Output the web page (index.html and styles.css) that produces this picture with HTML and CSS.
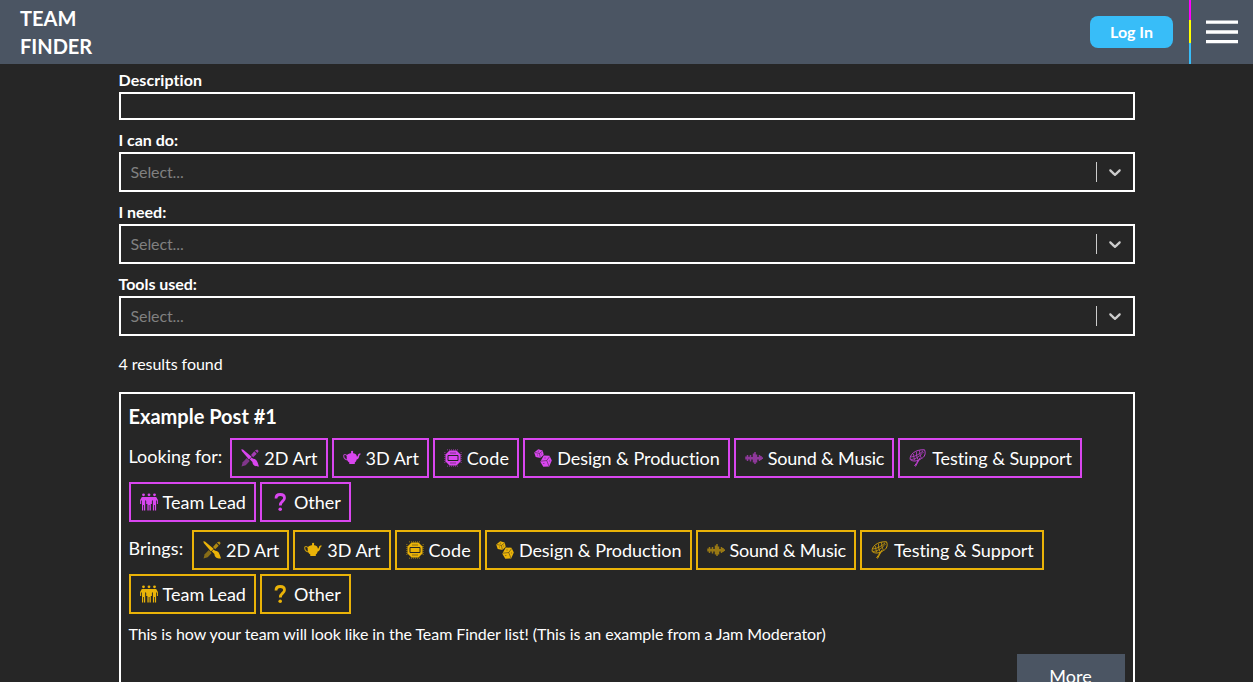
FILE: index.html
```html
<!DOCTYPE html>
<html lang="en">
<head>
<meta charset="utf-8">
<title>Team Finder</title>
<link rel="stylesheet" href="styles.css">
</head>
<body>
<svg class="sprite" aria-hidden="true">
  <symbol id="art2d" viewBox="0 0 18 18">
    <path d="M.3.3 2 .6l8.600 7.200-2.600 2.800L.8 2z" fill="currentColor"/>
    <path d="m10.300 8.600 2 1.200c3.500.2 4.400 3.300 5.700 7.700-3.500.3-6.600-1.100-6.600-4.500L8.900 10.600z" fill="currentColor"/>
    <path d="m16.200.4 1.500 1.500-1.200 2.200-2.600-2.600zM13.300 2.300l2.400 2.400-3.500 3.500-2.200-2.200z" fill="currentColor" opacity=".7"/>
    <path d="M5.800 9 1.700 13.300.5 17.500l4.200-1.200 4-4.200z" fill="currentColor" opacity=".5"/>
  </symbol>
  <symbol id="art3d" viewBox="0 0 18 18">
    <path d="M8.200 3.500a1.100 1.100 0 1 1 1.800 0l.2.800c1.800.3 3 1 3.300 1.900l.3 1.400c.8 0 1-.5 1.200-1.500.2-1 .8-1.600 2.700-1.500l-.2.800c-1.100.1-1.100 1.400-1.500 2.600-.4 1.300-1.200 2.200-2.300 2.600-.4 1.500-1 2.500-1.900 3v1.400H6.300v-1.400c-2-1-2.900-3.400-2.600-6.300l.3-1.200c.5-.9 1.900-1.500 3.900-1.800z" fill="currentColor"/>
    <path d="M4.200 7C3 5.300.6 4.700.7 7c.1 2 1.600 3.500 3.800 4" fill="none" stroke="currentColor" stroke-width="1.100" opacity=".8"/>
  </symbol>
  <symbol id="code" viewBox="0 0 18 18">
    <path d="M5.500 1.500h7l4 4v7l-4 4h-7l-4-4v-7z" fill="currentColor"/>
    <path d="M3 .8h12M3 17.200h12M.8 3v12M17.200 3v12" stroke="currentColor" stroke-width="1.500" stroke-dasharray="1 1" opacity=".4"/>
    <path d="M4 6.500h10v5H4z" class="cut"/>
    <path d="M6 4h6M6 14h6" class="cut faint"/>
  </symbol>
  <symbol id="design" viewBox="0 0 18 18">
    <path d="m4.200.2 4.500 1.200 1 4.300-3.200 3.300-4.800-1L.2 3.600zM9.700 6.500l5.800.3 2.300 4.600-2.600 6-5.900.3-3-5z" fill="currentColor"/>
    <path d="m.8 3.500 4.600.9 3.500-2.700M5.400 4.400l1 4.400M6.700 12.200l6-.7 3-4M12.700 11.500l2.200 5.500" class="cut faint"/>
    <path d="M3.800 2.200h1M3 6h.8M7.300 5h.8M10.500 9h1M9.300 14.500h1M15.300 12h.8" class="cut soft"/>
  </symbol>
  <symbol id="sound" viewBox="0 0 18 18">
    <path d="M1 7.500v3M2.500 6v6M4 7.700v2.800M5.500 6v6.500M7 8v2.500M8.500 4.500v9M10 3v12M11.500 5.500v8M13 8v2.500M14.500 6v6M16 7v4M17.300 8.300v1.600" stroke="currentColor" stroke-width="1.500" opacity=".58"/>
  </symbol>
  <symbol id="testing" viewBox="0 0 18 18">
    <g fill="none" stroke="currentColor" opacity=".85">
      <path d="M1.200 10.500C.3 6 6 .2 15.500.8c1.600 3.500.2 7.500-3.200 8.700-3.500 3-8.500 3.300-11.100 1z"/>
      <path d="M2 8c4-.5 8-2.500 12-6M2 10.500c5-.3 9-3.500 12.500-7.500M4.500 5c0 2 .5 4.500 1.500 6.300M7.500 3c-.2 2.500.3 5.500 1.500 7.700M10.500 1.500c0 2.500.5 5 1.800 7.500" stroke-width=".8"/>
      <path d="m11 9-4.500 8.500M10 10.500 5.500 17"/>
    </g>
  </symbol>
  <symbol id="lead" viewBox="0 0 18 18">
    <g fill="currentColor"><circle cx="3.500" cy="1.800" r="1.400"/><circle cx="9" cy="1.800" r="1.400"/><circle cx="14.500" cy="1.800" r="1.400"/>
    <path d="M1.800 4h14.400l1.700 3v4h-1V8l-.8-1v10.500H15V12h-.8v5.500h-1.300V7l-1 1v3h-1.100v6.500H9.500V12h-.8v5.500H7.400V11H6.200V8l-1-1v10.500H4V12h-.8v5.500H2V7l-.8 1v3H.1V7z"/></g>
  </symbol>
  <symbol id="other" viewBox="0 0 18 18">
    <path d="M5 5.400C5 2.800 6.500 1.500 9.200 1.500c2.800 0 4.300 1.300 4.300 3.500 0 3.300-4.200 3-4.200 7.500" fill="none" stroke="currentColor" stroke-width="2.800"/>
    <circle cx="9.200" cy="16.200" r="1.800" fill="currentColor"/>
  </symbol>
  <symbol id="chevron" viewBox="0 0 20 20">
    <path fill="currentColor" d="M4.516 7.548c.436-.446 1.043-.481 1.576 0L10 11.295l3.908-3.747c.533-.481 1.141-.446 1.574 0 .436.445.408 1.197 0 1.615-.406.418-4.695 4.502-4.695 4.502a1.095 1.095 0 0 1-1.576 0S4.924 9.581 4.516 9.163c-.409-.418-.436-1.170 0-1.615z"/>
  </symbol>
</svg>

<header class="topbar">
  <a class="brand">TEAM<br>FINDER</a>
  <button class="login">Log In</button>
  <span class="stripe"><i></i><i></i><i></i></span>
  <svg class="burger" viewBox="0 0 32 24"><path d="M0 2.200h32M0 12h32M0 21.700h32" stroke="#fff" stroke-width="3.300"/></svg>
</header>

<main class="page">
  <label class="field"><span class="name wide">Description</span><input class="text" type="text"></label>
  <div class="field"><span class="name">I can do:</span><div class="select"><span class="hint">Select...</span><i class="rule"></i><svg class="chevron"><use href="#chevron"/></svg></div></div>
  <div class="field"><span class="name">I need:</span><div class="select"><span class="hint">Select...</span><i class="rule"></i><svg class="chevron"><use href="#chevron"/></svg></div></div>
  <div class="field"><span class="name">Tools used:</span><div class="select"><span class="hint">Select...</span><i class="rule"></i><svg class="chevron"><use href="#chevron"/></svg></div></div>

  <p class="count">4 results found</p>

  <article class="post">
    <h2 class="title">Example Post #1</h2>
    <div class="skills looking">
      <span class="lead">Looking for:</span>
      <span class="tag"><svg><use href="#art2d"/></svg>2D Art</span>
      <span class="tag"><svg><use href="#art3d"/></svg>3D Art</span>
      <span class="tag code"><svg><use href="#code"/></svg>Code</span>
      <span class="tag design"><svg><use href="#design"/></svg>Design &amp; Production</span>
      <span class="tag sound"><svg><use href="#sound"/></svg>Sound &amp; Music</span>
      <span class="tag testing"><svg><use href="#testing"/></svg>Testing &amp; Support</span>
      <span class="tag"><svg><use href="#lead"/></svg>Team Lead</span>
      <span class="tag"><svg><use href="#other"/></svg>Other</span>
    </div>
    <div class="skills brings">
      <span class="lead">Brings:</span>
      <span class="tag"><svg><use href="#art2d"/></svg>2D Art</span>
      <span class="tag"><svg><use href="#art3d"/></svg>3D Art</span>
      <span class="tag code"><svg><use href="#code"/></svg>Code</span>
      <span class="tag design"><svg><use href="#design"/></svg>Design &amp; Production</span>
      <span class="tag sound"><svg><use href="#sound"/></svg>Sound &amp; Music</span>
      <span class="tag testing"><svg><use href="#testing"/></svg>Testing &amp; Support</span>
      <span class="tag"><svg><use href="#lead"/></svg>Team Lead</span>
      <span class="tag"><svg><use href="#other"/></svg>Other</span>
    </div>
    <p class="about">This is how your team will look like in the Team Finder list! (This is an example from a Jam Moderator)</p>
    <button class="more">More</button>
  </article>
</main>
</body>
</html>
```

FILE: styles.css
```css
* { box-sizing: border-box; }
body {
  margin: 0;
  height: 682px;
  overflow: hidden;
  background: #262626;
  color: #fff;
  font: 16px/24px Lato, sans-serif;
  font-variant-ligatures: none;
}
h2, p { margin: 0; }
button { border: 0; color: #fff; font-family: inherit; }
.sprite { display: none; }

.topbar {
  display: flex;
  align-items: center;
  height: 64px;
  padding: 0 15px 0 20px;
  background: #4b5563;
}
.brand { margin-right: auto; font-size: 20px; line-height: 28px; font-weight: 700; }
.login {
  width: 83px;
  height: 32px;
  padding: 0 0 2px;
  border-radius: 8px;
  background: #38bdf8;
  font-size: 16px;
  font-weight: 700;
}
.stripe { display: flex; flex-direction: column; width: 2px; height: 64px; margin: 0 15px 0 16px; }
.stripe i { flex: 0 0 20px; background: #f0f; }
.stripe i:nth-child(2) { flex-basis: 23px; background: #ff0; }
.stripe i:nth-child(3) { flex: 1; background: #38bdf8; }
.burger { width: 32px; height: 24px; }

.page { width: 1016px; margin: 0 auto; padding-top: 4px; }
.field { display: block; margin-bottom: 8px; }
.name { display: block; font-weight: 700; letter-spacing: -.03px; }
.wide { letter-spacing: .09px; }
.text {
  display: block;
  width: 100%;
  height: 28px;
  border: 2px solid #fff;
  background: transparent;
  color: #fff;
}
.select {
  display: flex;
  align-items: center;
  height: 40px;
  border: 2px solid #fff;
  padding-left: 10px;
}
.hint { flex: 1; color: #808080; letter-spacing: -.1px; }
.rule { width: 1px; height: 20px; background: #ccc; }
.chevron { width: 20px; height: 20px; margin: 0 8px; color: #ccc; }
.count { padding: 8px 0 16px; letter-spacing: -.06px; }

.post {
  display: flex;
  flex-direction: column;
  height: 320px;
  border: 2px solid #fff;
  padding: 8px;
}
.title { margin-bottom: 8px; font-size: 20px; line-height: 28px; font-weight: 700; }
.skills {
  display: flex;
  flex-wrap: wrap;
  gap: 4px;
  margin-bottom: 8px;
  font-size: 18px;
  line-height: 28px;
}
.lead { margin-right: 4px; padding-top: 4px; }
.brings .lead { margin-right: 4.600px; letter-spacing: .12px; }
.tag {
  display: flex;
  align-items: center;
  height: 40px;
  padding: 0 8px;
  border: 2px solid;
  white-space: nowrap;
}
.tag svg { width: 18px; height: 18px; margin: 0 5px 0 1px; }
.code { letter-spacing: .17px; }
.design { letter-spacing: -.04px; }
.sound { letter-spacing: -.23px; }
.testing { letter-spacing: -.07px; }
.looking .tag { border-color: #d946ef; }
.looking svg { color: #d946ef; }
.brings .tag { border-color: #eab308; }
.brings svg { color: #eab308; }
.cut { fill: none; stroke: #262626; stroke-width: 1; }
.faint { stroke-width: .5; }
.soft { opacity: .6; }
.about { letter-spacing: -.07px; }
.more {
  align-self: flex-end;
  width: 108px;
  height: 44px;
  margin-top: 8px;
  background: #4b5563;
  font-size: 18px;
  line-height: 28px;
}
```
